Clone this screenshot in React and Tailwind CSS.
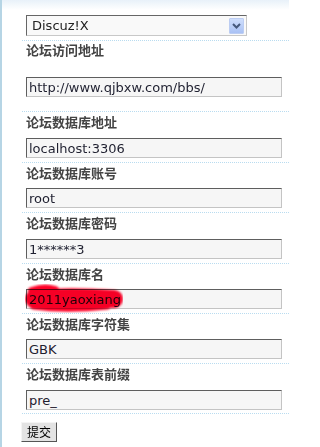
import React from "react";

const fields = [
  { label: "论坛访问地址", value: "http://www.qjbxw.com/bbs/", row: "pt-[1px] pb-[14px]", gap: "mt-[19px]" },
  { label: "论坛数据库地址", value: "localhost:3306", row: "pt-[2px] pb-[4px]", gap: "mt-[8px]" },
  { label: "论坛数据库账号", value: "root", row: "pt-[2px] pb-[4px]", gap: "mt-[7px]" },
  { label: "论坛数据库密码", value: "1******3", row: "pt-[2px] pb-[4px]", gap: "mt-[8px]" },
  { label: "论坛数据库名", value: "2011yaoxiang", row: "pt-[2px] pb-[4px]", gap: "mt-[7px]", hidden: true },
  { label: "论坛数据库字符集", value: "GBK", row: "pt-[2px] pb-[4px]", gap: "mt-[7px]" },
  { label: "论坛数据库表前缀", value: "pre_", row: "pt-[2px] pb-[3px]", gap: "mt-[8px]" },
];

// red marker stroke over the db name
const Scribble = () => (
  <svg
    className="absolute left-[-2px] top-[-6px] mix-blend-multiply pointer-events-none"
    width="100"
    height="30"
    viewBox="0 0 100 30"
  >
    <defs>
      <filter id="soft" x="-10%" y="-30%" width="120%" height="160%">
        <feGaussianBlur stdDeviation="0.8" />
      </filter>
    </defs>
    <g filter="url(#soft)" stroke="#ff0628" strokeLinecap="round" fill="none">
      <path d="M7 7 C15 4, 24 4, 30 6" strokeWidth="8" />
      <path d="M9 15 C30 13, 62 13, 89 15" strokeWidth="18" />
      <path d="M9 21 C30 24, 55 24, 82 21" strokeWidth="9" />
    </g>
  </svg>
);

export default function App() {
  return (
    <div className="w-[289px] h-[447px] overflow-hidden border-l-2 border-[#b6d5e5] bg-[linear-gradient(#e8f1f9,#ffffff_10px)] font-['DejaVu_Sans',sans-serif]">
      <div className="ml-[20px]">
        <div className="pt-[15px] pb-[4px] pl-[4px] border-b border-dotted border-[#b9dcf0]">
          <div className="w-[221px] h-[21px] flex items-center border border-t-[#666] border-l-[#666] border-r-[#c8c8c8] border-b-[#c8c8c8] bg-[#f9f9f9]">
            <span className="flex-1 pl-[5px] text-[13px] leading-[15px] text-[#222]">Discuz!X</span>
            <span className="w-[15px] h-[16px] mr-[2px] flex items-center justify-center bg-[linear-gradient(#cfdefc,#a9c1f4)] border border-[#bccdf2] rounded-[1px]">
              <svg width="9" height="6" viewBox="0 0 9 6">
                <path d="M1 1 L4.5 4.5 L8 1" stroke="#46597c" strokeWidth="2" fill="none" />
              </svg>
            </span>
          </div>
        </div>

        {fields.map((f) => (
          <div key={f.label} className={`pl-[4px] border-b border-dotted border-[#b9dcf0] ${f.row}`}>
            <div className="h-[16px] text-[13px] leading-[16px] font-bold text-[#444] font-['Noto_Sans_CJK_SC',sans-serif]">
              {f.label}
            </div>
            <div
              className={`relative w-[256px] h-[20px] flex items-center border border-t-[#5e5e5e] border-l-[#5e5e5e] border-r-[#c4c4c4] border-b-[#c4c4c4] bg-[#f6f6f6] ${f.gap}`}
            >
              <span className="pl-[2px] text-[13px] leading-[15px] text-[#1f2030]">{f.value}</span>
              {f.hidden && <Scribble />}
            </div>
          </div>
        ))}

        <button
          type="button"
          className="mt-[8px] ml-[-1px] w-[36px] h-[20px] flex items-center justify-center bg-[#e3e3e3] border border-t-[#f4f4f4] border-l-[#f4f4f4] border-r-[#555] border-b-[#555] text-[12px] leading-[14px] text-black font-['Noto_Sans_CJK_SC',sans-serif]"
        >
          提交
        </button>
      </div>
    </div>
  );
}
